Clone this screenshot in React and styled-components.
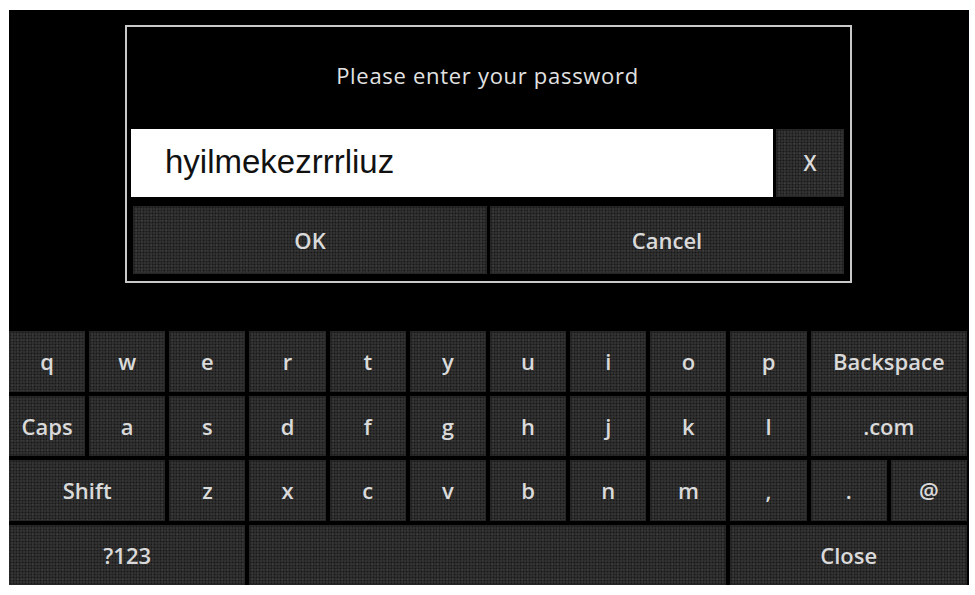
import React from "react";
import styled, { createGlobalStyle } from "styled-components";

const GlobalStyle = createGlobalStyle`
  body {
    margin: 0;
    background: #ffffff;
  }
`;

const Screen = styled.div`
  width: 960px;
  height: 575px;
  margin: 10px 0 0 9px;
  background: #000;
  display: flex;
  flex-direction: column;
  font-family: "Open Sans", "Noto Sans", sans-serif;
`;

const Dialog = styled.div`
  box-sizing: border-box;
  width: 727px;
  height: 258px;
  margin: 15px 0 0 116px;
  border: 2px solid #c9c9c9;
  padding: 0 6px 6px 4px;
  display: flex;
  flex-direction: column;
`;

const Title = styled.div`
  height: 102px;
  display: flex;
  align-items: center;
  justify-content: center;
  color: #e2e2e2;
  font-size: 22px;
  letter-spacing: 0.7px;
  padding-bottom: 6px;
  box-sizing: border-box;
`;

const InputRow = styled.div`
  display: grid;
  grid-template-columns: 642px 1fr;
  gap: 3px;
  height: 68px;
`;

const Field = styled.div`
  background: #fff;
  display: flex;
  align-items: center;
  padding: 0 0 2px 34px;
  font-family: "Liberation Sans", Arial, sans-serif;
  font-size: 33px;
  color: #111;
`;

const ButtonRow = styled.div`
  display: grid;
  grid-template-columns: 1fr 1fr;
  gap: 3px;
  height: 68px;
  margin: 9px 0 0 2px;
`;

const Key = styled.div`
  grid-column: span ${(p) => p.$span || 1};
  display: flex;
  align-items: center;
  justify-content: center;
  color: #dadada;
  font-size: ${(p) => p.$size || 22}px;
  font-weight: 600;
  background-color: #313131;
  background-image: radial-gradient(rgba(0, 0, 0, 0.5) 0.7px, transparent 1.2px),
    radial-gradient(rgba(255, 255, 255, 0.07) 0.7px, transparent 1.2px);
  background-size: 3px 3px, 5px 5px;
  background-position: 0 0, 1px 2px;
  box-shadow: inset 0 0 0 1px #262626;
  user-select: none;
`;

const Keyboard = styled.div`
  margin-top: auto;
  height: 254px;
  display: grid;
  grid-template-columns: repeat(12, 1fr);
  grid-template-rows: repeat(4, 1fr);
  gap: 4px;
  padding-right: 2px;
`;

const rows = [
  ["q", "w", "e", "r", "t", "y", "u", "i", "o", "p", ["Backspace", 2]],
  ["Caps", "a", "s", "d", "f", "g", "h", "j", "k", "l", [".com", 2]],
  [["Shift", 2], "z", "x", "c", "v", "b", "n", "m", ",", ".", "@"],
  [["?123", 3], ["", 6], ["Close", 3]],
];

export default function App() {
  return (
    <>
      <GlobalStyle />
      <Screen>
        <Dialog>
          <Title>Please enter your password</Title>
          <InputRow>
            <Field>hyilmekezrrrliuz</Field>
            <Key $size={21}>X</Key>
          </InputRow>
          <ButtonRow>
            <Key>OK</Key>
            <Key>Cancel</Key>
          </ButtonRow>
        </Dialog>
        <Keyboard>
          {rows.flat().map((k, i) => {
            const [label, span] = Array.isArray(k) ? k : [k, 1];
            return (
              <Key key={i} $span={span}>
                {label}
              </Key>
            );
          })}
        </Keyboard>
      </Screen>
    </>
  );
}
